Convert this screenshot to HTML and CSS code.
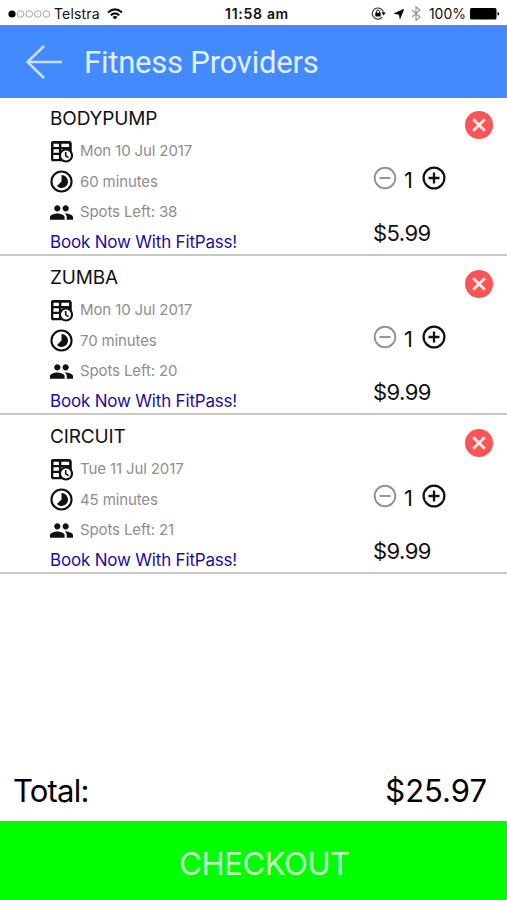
FILE: index.html
```html
<!DOCTYPE html>
<html lang="en">
<head>
<meta charset="utf-8">
<title>Fitness Providers</title>
<link rel="stylesheet" href="styles.css">
</head>
<body>
<svg class="defs" aria-hidden="true">
  <symbol id="calendar" viewBox="0 0 23 23">
    <path d="M3 1H19.500A2 2 0 0 1 21.500 3V12H2V21.300H3A2 2 0 0 1 1 19.300V3A2 2 0 0 1 3 1z" fill="currentColor"/>
    <path d="M3.300 3.700H9V7H3.300zM11.300 3.700H19.200V7H11.300zM3.300 9.200H9V13H3.300zM11.300 9.200H19.200V13H11.300z" fill="#fff"/>
    <path d="M2 8H21M2 13.800H12M10 2V20M2.200 2V20M20.400 3V12M2 20.200H12.500" fill="none" stroke="currentColor" stroke-width="2.200"/>
    <circle cx="16" cy="15.500" r="6" fill="#fff" stroke="currentColor" stroke-width="2.100"/>
    <path d="M15.700 12V15.800L18.500 17.700" fill="none" stroke="currentColor" stroke-width="1.600"/>
  </symbol>
  <symbol id="timer" viewBox="0 0 24 24">
    <circle cx="12" cy="12" r="10.500" fill="none" stroke="currentColor" stroke-width="2.200"/>
    <path d="M12 5.300A6.700 6.700 0 1 1 7.300 16.700L12 12z" fill="currentColor"/>
  </symbol>
  <symbol id="people" viewBox="1 5 22 14">
    <path d="M16 11c1.660 0 2.990-1.340 2.990-3S17.660 5 16 5s-3 1.340-3 3 1.340 3 3 3zm-8 0c1.660 0 2.990-1.340 2.990-3S9.660 5 8 5 5 6.340 5 8s1.340 3 3 3zm0 2c-2.330 0-7 1.170-7 3.500V19h14v-2.500c0-2.330-4.670-3.500-7-3.500zm8 0c-.29 0-.62.020-.97.050 1.160.84 1.970 1.970 1.970 3.450V19h6v-2.500c0-2.330-4.670-3.500-7-3.500z" fill="currentColor"/>
  </symbol>
  <symbol id="minus" viewBox="0 0 24 24">
    <circle cx="12" cy="12" r="10.300" fill="none" stroke="currentColor" stroke-width="1.900"/>
    <path d="M6.500 12h11" stroke="currentColor" stroke-width="1.900"/>
  </symbol>
  <symbol id="plus" viewBox="0 0 24 24">
    <circle cx="12" cy="12" r="10.400" fill="none" stroke="currentColor" stroke-width="2.200"/>
    <path d="M6.500 12h11M12 6.500v11" stroke="currentColor" stroke-width="2.300"/>
  </symbol>
  <symbol id="remove" viewBox="0 0 28 28">
    <circle cx="14" cy="14" r="14" fill="#f95557"/>
    <path d="M8.200 8.200l11.600 11.600M19.800 8.200l-11.600 11.600" stroke="#ffeaea" stroke-width="2.800"/>
  </symbol>
</svg>

<div class="status">
  <div class="carrier">
    <svg class="signal" viewBox="0 0 42 8"><circle cx="4" cy="4" r="3.600"/><g fill="none" stroke="#999" stroke-width=".9"><circle cx="12.600" cy="4" r="3.300"/><circle cx="21.200" cy="4" r="3.300"/><circle cx="29.800" cy="4" r="3.300"/><circle cx="38.400" cy="4" r="3.300"/></g></svg>
    <span class="carrier-name">Telstra</span>
    <svg class="wifi" viewBox="0 0 16 12"><g fill="none" stroke="#111" stroke-width="2"><path d="M1 4.500Q8-1.800 15 4.500"/><path d="M3.700 7.300Q8 3.500 12.300 7.300"/></g><path d="M8 11.500L5.500 9Q8 7 10.500 9z"/></svg>
  </div>
  <div class="clock">11:58 am</div>
  <div class="indicators">
    <svg class="lock" viewBox="0 0 15 13"><path d="M11.200 10.200A5.600 5.600 0 1 1 12.500 6" fill="none" stroke="#333" stroke-width="1.100"/><path d="M10.500 5.500h4.200l-2.100 2.900z"/><path d="M4.300 5.700h5.400v3.800H4.300z"/><path d="M5.400 6V4.700a1.600 1.600 0 0 1 3.200 0V6" fill="none" stroke="#111"/></svg>
    <svg class="location" viewBox="0 0 10 10"><path d="M10 0L6 10 5 5.400 0 4.500z" stroke="#000" stroke-width=".4"/></svg>
    <svg class="bluetooth" viewBox="0 0 10 15"><path d="M1 4l8 7-4 3.500V.8L9 4l-8 7" fill="none" stroke="#999" stroke-width="1.200"/></svg>
    <span class="percent">100%</span>
    <svg class="battery" viewBox="0 0 30 12"><rect width="26.500" height="11.500" rx="1.500"/><path d="M27.500 4q1.800 0 1.800 1.800t-1.800 1.800z"/></svg>
  </div>
</div>

<header class="header">
  <svg class="back" viewBox="0 0 36 34"><path d="M36 17H1.500M18 1L1.500 17 18 33" fill="none" stroke="#c9e0ff" stroke-width="2.500"/></svg>
  <h1 class="title">Fitness Providers</h1>
</header>

<main class="cart">
  <article class="item">
    <div class="info">
      <h2 class="name">BODYPUMP</h2>
      <div class="detail"><svg class="icon"><use href="#calendar"/></svg><span class="date">Mon 10 Jul 2017</span></div>
      <div class="detail"><svg class="icon"><use href="#timer"/></svg><span class="duration">60 minutes</span></div>
      <div class="detail"><svg class="icon people"><use href="#people"/></svg><span class="spots">Spots Left: 38</span></div>
      <a class="book">Book Now With FitPass!</a>
    </div>
    <div class="order">
      <div class="quantity"><svg class="step off"><use href="#minus"/></svg><span class="count">1</span><svg class="step"><use href="#plus"/></svg></div>
      <div class="price">$5.99</div>
    </div>
    <svg class="remove"><use href="#remove"/></svg>
  </article>
  <article class="item">
    <div class="info">
      <h2 class="name">ZUMBA</h2>
      <div class="detail"><svg class="icon"><use href="#calendar"/></svg><span class="date">Mon 10 Jul 2017</span></div>
      <div class="detail"><svg class="icon"><use href="#timer"/></svg><span class="duration">70 minutes</span></div>
      <div class="detail"><svg class="icon people"><use href="#people"/></svg><span class="spots">Spots Left: 20</span></div>
      <a class="book">Book Now With FitPass!</a>
    </div>
    <div class="order">
      <div class="quantity"><svg class="step off"><use href="#minus"/></svg><span class="count">1</span><svg class="step"><use href="#plus"/></svg></div>
      <div class="price">$9.99</div>
    </div>
    <svg class="remove"><use href="#remove"/></svg>
  </article>
  <article class="item">
    <div class="info">
      <h2 class="name">CIRCUIT</h2>
      <div class="detail"><svg class="icon"><use href="#calendar"/></svg><span class="date">Tue 11 Jul 2017</span></div>
      <div class="detail"><svg class="icon"><use href="#timer"/></svg><span class="duration">45 minutes</span></div>
      <div class="detail"><svg class="icon people"><use href="#people"/></svg><span class="spots">Spots Left: 21</span></div>
      <a class="book">Book Now With FitPass!</a>
    </div>
    <div class="order">
      <div class="quantity"><svg class="step off"><use href="#minus"/></svg><span class="count">1</span><svg class="step"><use href="#plus"/></svg></div>
      <div class="price">$9.99</div>
    </div>
    <svg class="remove"><use href="#remove"/></svg>
  </article>
</main>

<div class="total"><span class="total-label">Total:</span><span class="amount">$25.97</span></div>
<button class="checkout">CHECKOUT</button>
</body>
</html>
```
FILE: styles.css
```css
* { box-sizing: border-box; margin: 0; }

body {
  height: 900px;
  display: flex;
  flex-direction: column;
  background: #fff;
  color: #111;
  font-family: Inter, "Liberation Sans", sans-serif;
  white-space: nowrap;
  overflow: hidden;
}

svg { display: block; flex: none; }
.defs { display: none; }

.status {
  height: 25px;
  flex: none;
  display: grid;
  grid-template-columns: 1fr auto 1fr;
  align-items: center;
  padding: 2px 7px 0 8px;
  font-size: 14px;
}
.carrier, .indicators { display: flex; align-items: center; }
.indicators { justify-content: flex-end; }
.signal { width: 42px; height: 8px; margin-right: 4px; }
.carrier-name { letter-spacing: 0.15px; }
.wifi { width: 16px; height: 12px; margin-left: 7px; }
.clock { padding-left: 6px; font-weight: 600; font-size: 14px; letter-spacing: 0.7px; }
.lock { width: 15px; height: 13px; }
.location { width: 10px; height: 10px; margin-left: 8px; }
.bluetooth { width: 10px; height: 15px; margin-left: 7px; }
.percent { margin-left: 8px; }
.battery { width: 30px; height: 12px; margin-left: 4px; }

.header {
  height: 73px;
  flex: none;
  display: flex;
  align-items: center;
  padding-left: 26px;
  background: #448aff;
}
.back { width: 36px; height: 34px; }
.title {
  margin-left: 22px;
  padding-top: 3px;
  color: #e0f0ff;
  font: 400 31px/36px Roboto, sans-serif;
  letter-spacing: -0.22px;
}

.cart { flex: 1; }
.item {
  height: 159px;
  display: grid;
  grid-template-columns: 323px 92px 28px;
  padding-left: 50px;
  border-bottom: 2px solid #c8c8c8;
}
.item:first-child { height: 158px; }
.item:first-child .info, .item:first-child .order { margin-top: -1px; }

.info { padding-top: 9px; }
.name { font-size: 19px; line-height: 26px; font-weight: 400; letter-spacing: -0.15px; }
.detail {
  height: 30.5px;
  display: flex;
  align-items: center;
  gap: 7px;
  color: #8e8e8e;
  font-size: 15px;
  letter-spacing: -0.12px;
}
.name + .detail { margin-top: 4px; }
.date, .spots { padding-bottom: 2px; }
.icon { width: 23px; height: 23px; color: #111; }
.icon.people { height: 15px; }
.book {
  display: block;
  color: #1e0ca0;
  font-size: 17px;
  line-height: 29px;
  letter-spacing: -0.19px;
}

.order { padding-top: 69px; }
.quantity { height: 24px; display: flex; align-items: center; }
.step { width: 24px; height: 24px; }
.off { color: #929292; }
.count { width: 25px; padding: 4px 2px 0 0; text-align: center; font-size: 22px; }
.price { margin-top: 28px; font-size: 22px; line-height: 30px; letter-spacing: -0.55px; }
.remove { width: 28px; height: 28px; margin-top: 14px; }
.item:first-child .remove { margin-top: 13px; }

.total {
  height: 61px;
  flex: none;
  display: flex;
  align-items: center;
  justify-content: space-between;
  padding: 0 20px 0 13px;
  color: #000;
  font-size: 31px;
}
.total-label { letter-spacing: -0.8px; }
.checkout {
  height: 79px;
  flex: none;
  border: 0;
  padding: 6px 0 0 22px;
  background: #0f0;
  color: #ccffcc;
  font: 400 31px Inter, sans-serif;
  letter-spacing: -0.4px;
}
```
